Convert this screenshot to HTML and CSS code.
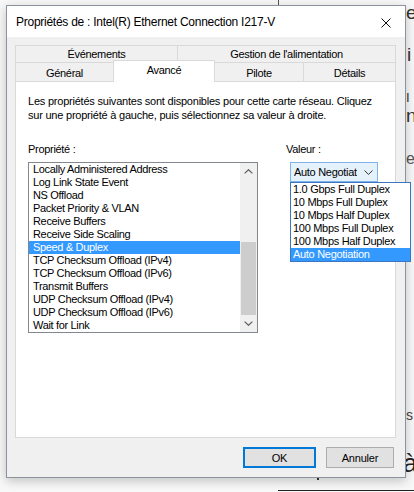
FILE: index.html
```html
<!DOCTYPE html>
<html lang="fr">
<head>
<meta charset="utf-8">
<title>Propriétés de : Intel(R) Ethernet Connection I217-V</title>
<link rel="stylesheet" href="styles.css">
</head>
<body>
<div class="desktop">
  <div class="backdrop">
    <span class="bg-vline"></span>
    <span class="frag frag-ec">ec</span>
    <span class="frag frag-i">i</span>
    <span class="frag frag-l">I</span>
    <span class="frag frag-n">n</span>
    <span class="frag frag-es">es</span>
    <span class="frag frag-s">s</span>
    <span class="frag frag-a">à</span>
    <span class="bg-dot"></span>
    <span class="bg-hline"></span>
  </div>

  <div class="window">
    <div class="titlebar">
      <span class="title">Propriétés de : Intel(R) Ethernet Connection I217-V</span>
      <svg class="close" width="10" height="10" viewBox="0 0 10 10"><path d="M0.5 0.5 L9.5 9.5 M9.5 0.5 L0.5 9.5" stroke="#111" stroke-width="1" fill="none"/></svg>
    </div>
    <div class="body">
      <div class="tabs">
        <div class="tabrow row1">
          <div class="tab w-evt">Événements</div>
          <div class="tab w-gest">Gestion de l'alimentation</div>
        </div>
        <div class="tabrow row2">
          <div class="tab w-gen">Général</div>
          <div class="tab w-av selected">Avancé</div>
          <div class="tab w-pil">Pilote</div>
          <div class="tab w-det">Détails</div>
        </div>
      </div>
      <div class="panel">
        <p class="desc">Les propriétés suivantes sont disponibles pour cette carte réseau. Cliquez<br>sur une propriété à gauche, puis sélectionnez sa valeur à droite.</p>
        <div class="fields">
          <div class="col-prop">
            <div class="label">Propriété :</div>
            <div class="listbox">
              <ul class="items">
                <li>Locally Administered Address</li>
                <li>Log Link State Event</li>
                <li>NS Offload</li>
                <li>Packet Priority &amp; VLAN</li>
                <li>Receive Buffers</li>
                <li>Receive Side Scaling</li>
                <li class="sel">Speed &amp; Duplex</li>
                <li>TCP Checksum Offload (IPv4)</li>
                <li>TCP Checksum Offload (IPv6)</li>
                <li>Transmit Buffers</li>
                <li>UDP Checksum Offload (IPv4)</li>
                <li>UDP Checksum Offload (IPv6)</li>
                <li>Wait for Link</li>
              </ul>
              <div class="scrollbar">
                <div class="sb-btn"><svg width="9" height="5" viewBox="0 0 9 5"><path d="M0.6 4.4 L4.5 0.7 L8.4 4.4" fill="none" stroke="#606060" stroke-width="1.2"/></svg></div>
                <div class="sb-track"><div class="sb-thumb"></div></div>
                <div class="sb-btn"><svg width="9" height="5" viewBox="0 0 9 5"><path d="M0.6 0.6 L4.5 4.3 L8.4 0.6" fill="none" stroke="#606060" stroke-width="1.2"/></svg></div>
              </div>
            </div>
          </div>
          <div class="col-val">
            <div class="label">Valeur :</div>
            <div class="combo-wrap">
              <div class="combo">
                <span class="combo-text">Auto Negotiation</span>
                <svg class="combo-arrow" width="9" height="5" viewBox="0 0 9 5"><path d="M0.5 0.5 L4.5 4.4 L8.5 0.5" fill="none" stroke="#333" stroke-width="1"/></svg>
              </div>
              <ul class="dropdown">
                <li>1.0 Gbps Full Duplex</li>
                <li>10 Mbps Full Duplex</li>
                <li>10 Mbps Half Duplex</li>
                <li>100 Mbps Full Duplex</li>
                <li>100 Mbps Half Duplex</li>
                <li class="sel">Auto Negotiation</li>
              </ul>
            </div>
          </div>
        </div>
      </div>
      <div class="buttons">
        <button class="btn btn-ok">OK</button>
        <button class="btn btn-cancel">Annuler</button>
      </div>
    </div>
  </div>
</div>
</body>
</html>
```

FILE: styles.css
```css
* { box-sizing: border-box; }

html, body {
  margin: 0;
  padding: 0;
}

body {
  font-family: "Liberation Sans", Arial, sans-serif;
  font-size: 11px;
  letter-spacing: -0.3px;
  color: #000;
  background: #f8f8f8;
}

.desktop {
  position: relative;
  width: 414px;
  height: 492px;
  overflow: hidden;
  background: #f8f8f8;
}

/* --- background window fragments --- */
.backdrop { position: absolute; inset: 0; }
.bg-vline {
  position: absolute; left: 278px; top: 0; width: 1px; height: 6px; background: #555;
}
.frag {
  position: absolute;
  left: 406px;
  color: #333;
  font-family: "Liberation Sans", Arial, sans-serif;
  letter-spacing: 0;
  line-height: 1;
}
.frag-ec { top: 3px; font-size: 19px; }
.frag-i { top: 45px; font-size: 19px; left: 407px; }
.frag-l { top: 91px; font-size: 13px; left: 406px; }
.frag-n { top: 106px; font-size: 19px; }
.frag-es { top: 151px; font-size: 16px; color: #555; }
.frag-s { top: 408px; font-size: 14px; color: #444; }
.frag-a { top: 450px; font-size: 26px; left: 403px; color: #222; }
.bg-dot { position: absolute; left: 317px; top: 478px; width: 2px; height: 2px; background: #333; }
.bg-hline { position: absolute; left: 278px; top: 490px; width: 136px; height: 1px; background: #222; }

/* --- window --- */
.window {
  position: absolute;
  left: 6px;
  top: 5px;
  width: 400px;
  height: 473px;
  border: 1px solid #8b949e;
  background: #f0f0f0;
  box-shadow: 0 3px 10px rgba(0, 0, 0, 0.22);
  display: flex;
  flex-direction: column;
}

.titlebar {
  height: 31px;
  background: #fff;
  display: flex;
  align-items: center;
  justify-content: space-between;
  padding: 0 14px 0 9px;
  flex-shrink: 0;
}
.title {
  font-size: 12px;
  letter-spacing: -0.26px;
  line-height: 31px;
  padding-top: 1px;
}
.close { display: block; margin-top: 2px; }

.body {
  flex: 1;
  padding: 8px 9px 0 8px;
  display: flex;
  flex-direction: column;
}

/* --- tabs --- */
.tabs { display: flex; flex-direction: column; }
.tabrow { display: flex; }
.row1 { height: 18px; }
.row2 { height: 20px; margin-top: -1px; }

.tab {
  flex-shrink: 0;
  border: 1px solid #d9d9d9;
  background: #f0f0f0;
  text-align: center;
  line-height: 16px;
  white-space: nowrap;
}
.tab + .tab { margin-left: -1px; }
.row2 .tab { line-height: 18px; padding-top: 1px; }

.w-evt { width: 163px; }
.w-gest { width: 219px; }
.w-gen { width: 99px; }
.w-av { width: 102px; }
.w-pil { width: 90px; }
.w-det { width: 93px; }

.tab.selected {
  background: #fff;
  border-bottom: none;
  margin-top: -2px;
  position: relative;
  z-index: 2;
  padding-top: 0;
  line-height: 18px;
}

/* --- panel --- */
.panel {
  position: relative;
  z-index: 1;
  width: 381px;
  height: 357px;
  margin-top: -1px;
  border: 1px solid #d9d9d9;
  background: #fff;
  padding: 12px 12px 0 12px;
}

.desc {
  margin: 0;
  line-height: 14px;
  letter-spacing: -0.22px;
  white-space: nowrap;
}

.fields {
  display: flex;
  margin-top: 20px;
}

.label { line-height: 14px; }

.col-prop { width: 230px; flex-shrink: 0; }
.col-val { margin-left: 28px; }

.listbox {
  margin-top: 6px;
  width: 230px;
  height: 171px;
  border: 1px solid #828790;
  display: flex;
  background: #fff;
}

.items {
  list-style: none;
  margin: 0;
  padding: 0;
  flex: 1;
}
.items li {
  height: 13px;
  line-height: 13px;
  padding-left: 4px;
  white-space: nowrap;
  letter-spacing: -0.33px;
}
.items li.sel { background: #3399ff; color: #fff; }

.scrollbar {
  width: 17px;
  background: #f0f0f0;
  display: flex;
  flex-direction: column;
}
.sb-btn {
  height: 17px;
  display: flex;
  align-items: center;
  justify-content: center;
  flex-shrink: 0;
}
.sb-btn svg { display: block; }
.sb-track { flex: 1; display: flex; flex-direction: column; justify-content: flex-end; }
.sb-thumb { height: 73px; margin: 0 1px; background: #cdcdcd; }

/* --- combo --- */
.combo-wrap {
  position: relative;
  margin-top: 6px;
  margin-left: 4px;
}
.combo {
  width: 88px;
  height: 20px;
  border: 1px solid #7eb4ea;
  background: #e5f1fb;
  display: flex;
  align-items: center;
  padding-left: 3px;
}
.combo-text {
  width: 63px;
  overflow: hidden;
  white-space: nowrap;
  line-height: 18px;
  letter-spacing: -0.3px;
}
.combo-arrow { display: block; margin-left: 7px; }

.dropdown {
  position: absolute;
  left: 0;
  top: 20px;
  width: 121px;
  margin: 0;
  padding: 0;
  list-style: none;
  border: 1px solid #3b76c2;
  background: #fff;
  z-index: 5;
}
.dropdown li {
  height: 13px;
  line-height: 13px;
  padding-left: 2px;
  white-space: nowrap;
  letter-spacing: -0.3px;
}
.dropdown li.sel { background: #3399ff; color: #fff; }

/* --- buttons --- */
.buttons {
  display: flex;
  justify-content: flex-end;
  gap: 10px;
  margin-top: 9px;
  padding-right: 2px;
}
.btn {
  height: 21px;
  background: #e1e1e1;
  border: 1px solid #adadad;
  font-family: "Liberation Sans", Arial, sans-serif;
  font-size: 11px;
  letter-spacing: -0.2px;
  color: #000;
  padding: 0;
  margin: 0;
}
.btn-ok { width: 73px; border: 2px solid #0078d7; }
.btn-cancel { width: 68px; }
```
